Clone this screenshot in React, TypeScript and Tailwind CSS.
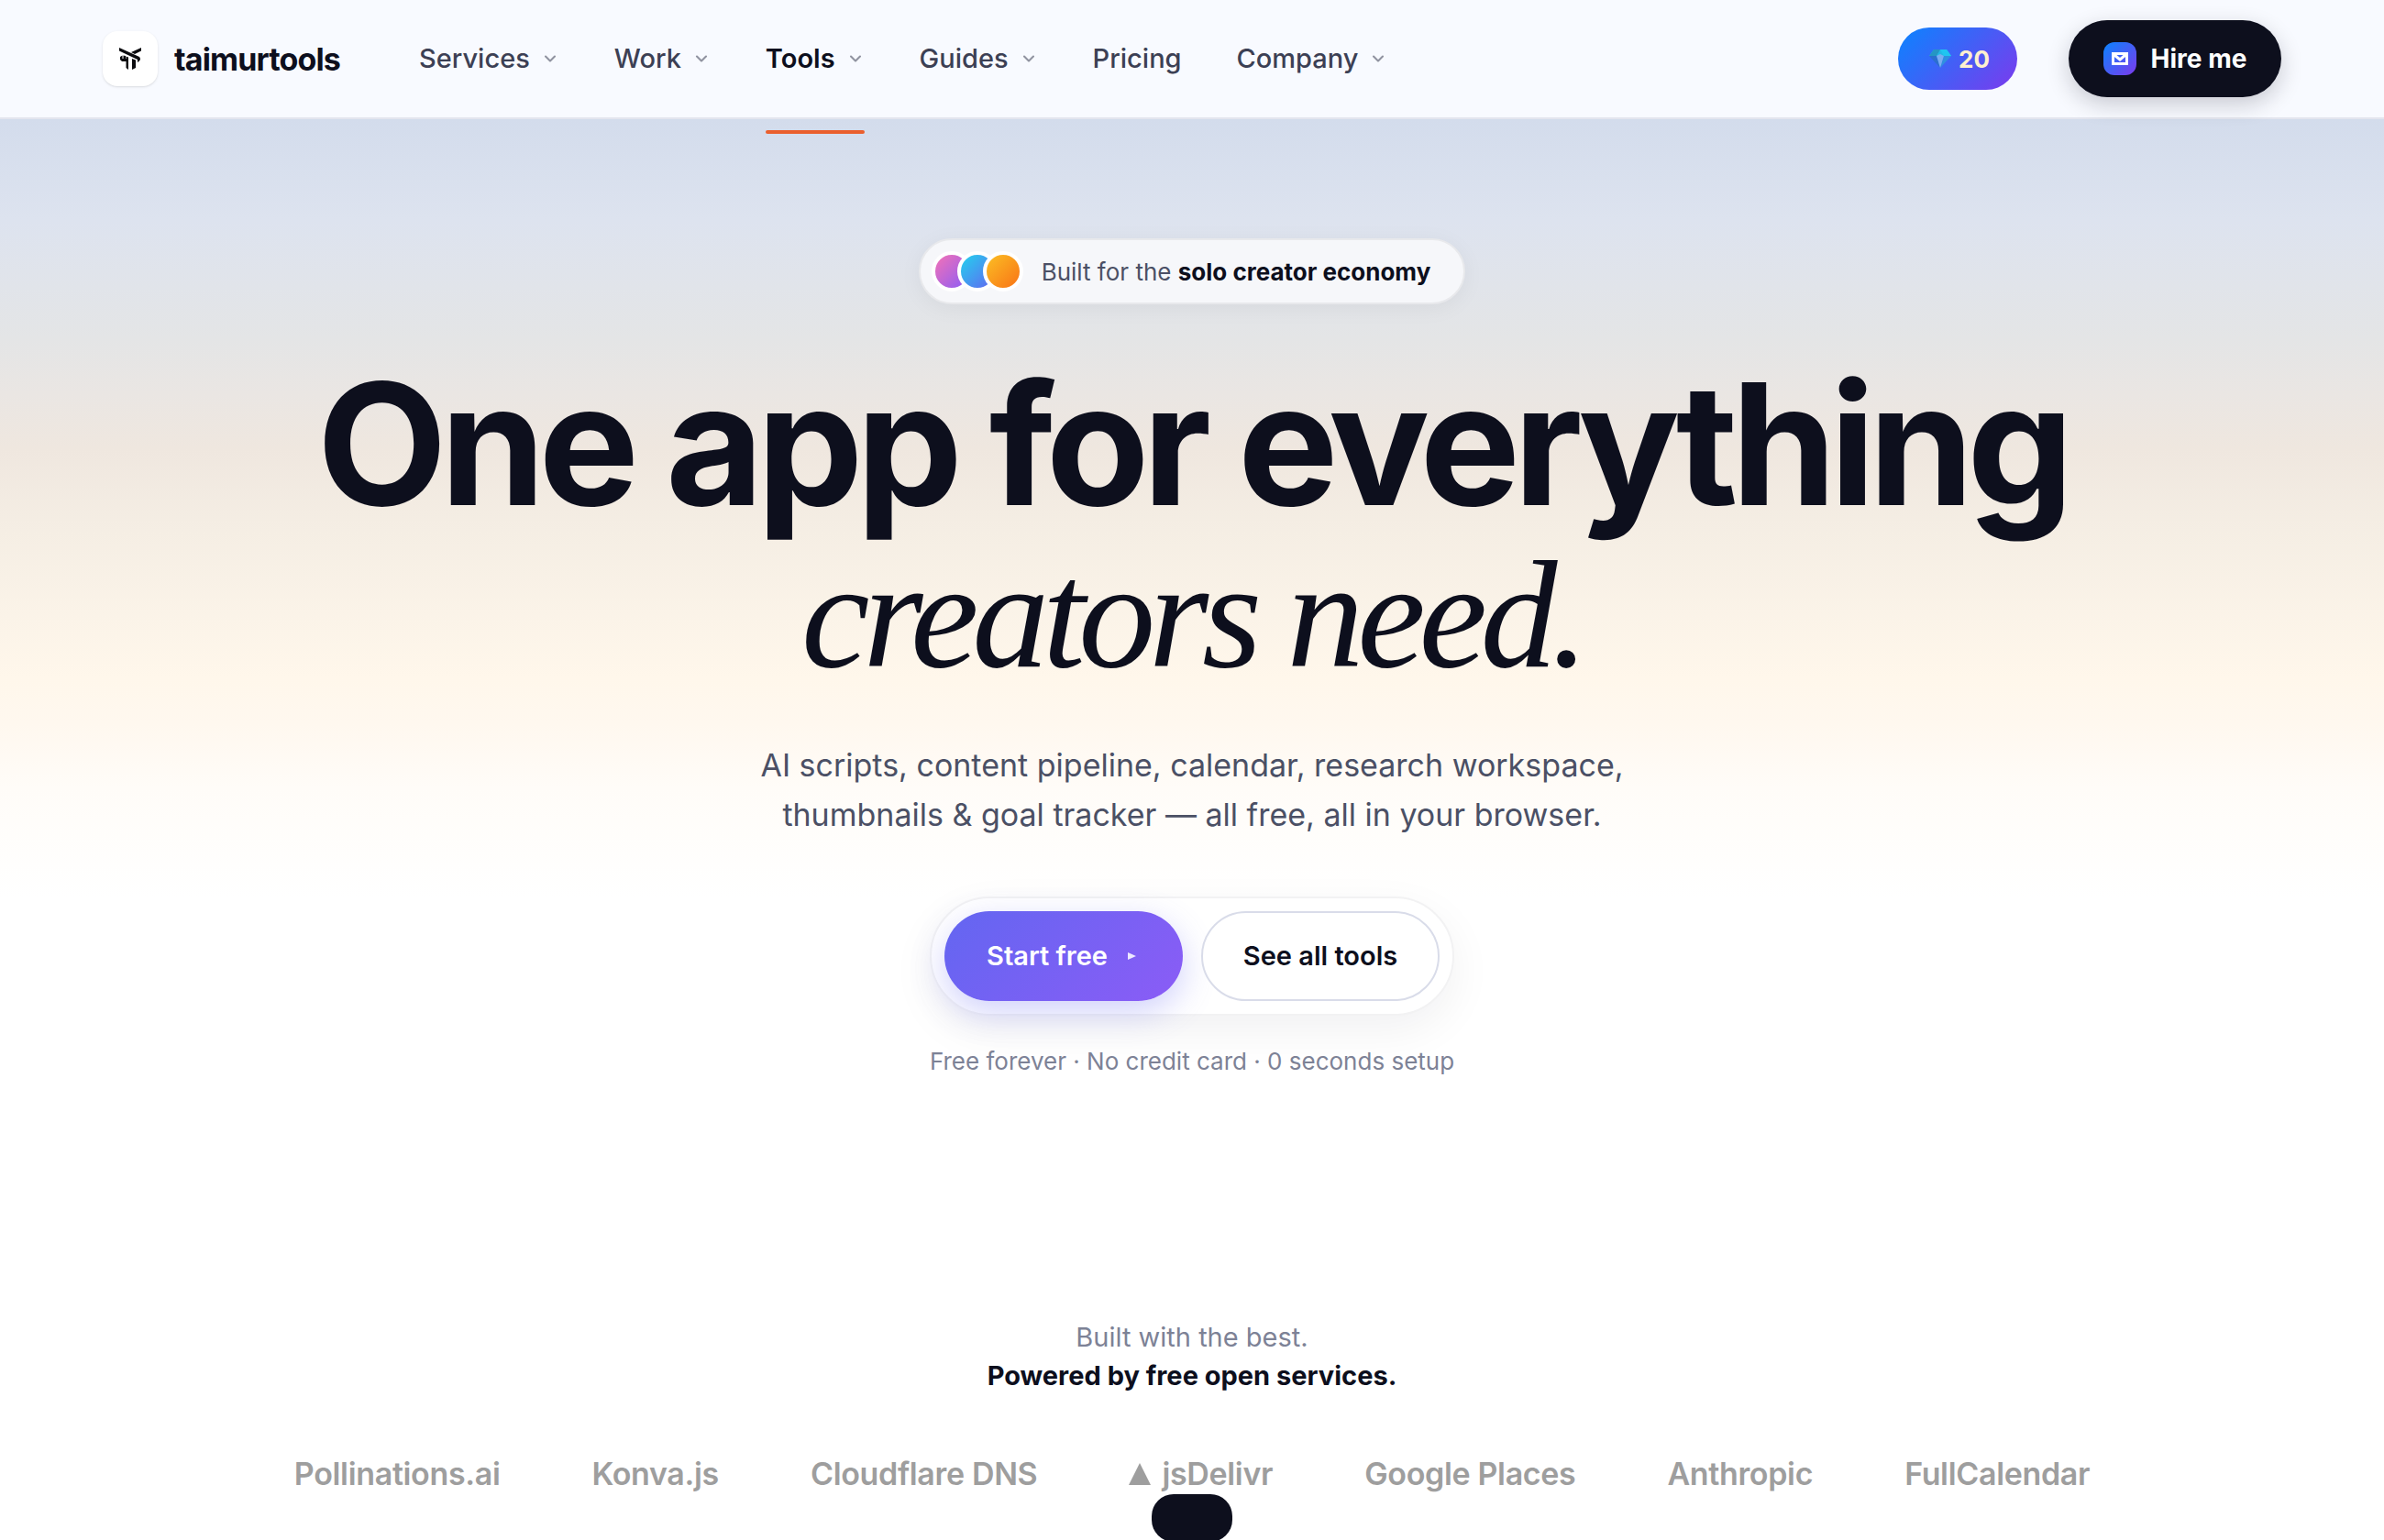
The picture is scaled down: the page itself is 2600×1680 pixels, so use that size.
import React from "react";
import { ChevronDown } from "lucide-react";

const navItems = [
  { title: "Services", menu: true, active: false },
  { title: "Work", menu: true, active: false },
  { title: "Tools", menu: true, active: true },
  { title: "Guides", menu: true, active: false },
  { title: "Pricing", menu: false, active: false },
  { title: "Company", menu: true, active: false },
];

const partners = [
  { name: "Pollinations.ai", mark: false },
  { name: "Konva.js", mark: false },
  { name: "Cloudflare DNS", mark: false },
  { name: "jsDelivr", mark: true },
  { name: "Google Places", mark: false },
  { name: "Anthropic", mark: false },
  { name: "FullCalendar", mark: false },
];

const Logo = () => (
  <svg viewBox="0 0 24 24" className="w-6 h-6" fill="#0b0b0f">
    <path d="M0 0 L22 10 Q23 11 23 13 Q22 15 20 16 L20 13 L0 3.5 Z" />
    <path d="M24 0 V3.5 L17 7 L13 5 Z" />
    <path d="M1 10 L3.5 8.5 V12 H4.5 V8.5 L7 9 V12 H7.5 V9.5 L10 10.5 V24 L7.5 22 V15 H3 L1 13 Z" />
    <path d="M14 12 L18 13.5 V22 L14 24 Z" />
  </svg>
);

const Gem = () => (
  <svg viewBox="0 0 24 20" className="w-6 h-5">
    <path d="M5 0 H19 L24 7 H0 Z" fill="#22b8e6" />
    <path d="M5 0 L0 7 H8 L12 0 Z" fill="#2596c4" />
    <path d="M19 0 L24 7 H16 L12 0 Z" fill="#20c5f0" />
    <path d="M0 7 H8 L12 20 Z" fill="#2b6fce" />
    <path d="M24 7 H16 L12 20 Z" fill="#2f8fe0" />
    <path d="M8 7 L12 5 L16 7 L12 20 Z" fill="#79aef2" />
  </svg>
);

const Header = () => {
  return (
    <header className="relative z-10 h-[130px] px-28 flex items-center bg-[#f8faff] border-b-2 border-[#e3e5ee]">
      <a href="#" className="flex items-center gap-[18px]">
        <span className="w-[60px] h-[60px] rounded-2xl bg-white shadow-sm flex items-center justify-center">
          <Logo />
        </span>
        <span className="text-[34px] font-bold tracking-tight text-[#0d0f1d]">taimurtools</span>
      </a>
      <nav className="ml-[86px] flex items-center gap-[60px]">
        {navItems.map((item) => (
          <a
            href="#"
            key={item.title}
            className={`relative flex items-center gap-3 text-[29px] ${
              item.active ? "font-semibold text-[#0d0f1d]" : "font-medium text-[#3c4054]"
            }`}
          >
            {item.title}
            {item.menu && <ChevronDown className="w-5 h-5 text-[#9093a0]" strokeWidth={2.5} />}
            {item.active && (
              <span className="absolute left-0 right-0 top-[100px] h-1 rounded-full bg-[#ea5f2d]"></span>
            )}
          </a>
        ))}
      </nav>
      <div className="ml-auto flex items-center gap-14">
        <button className="w-[130px] h-[68px] pl-1 rounded-full bg-[linear-gradient(135deg,#0a84ff,#7c3aed)] flex items-center justify-center gap-2 text-[26px] font-bold text-[#fdf0cf]">
          <Gem />
          20
        </button>
        <button className="w-[232px] h-[84px] rounded-full bg-[#0d0f1d] shadow-[0_8px_24px_rgba(13,15,29,0.2)] flex items-center justify-center gap-4 text-[28px] font-bold text-white">
          <span className="w-9 h-9 rounded-xl bg-[linear-gradient(135deg,#0a84ff,#7c3aed)] flex items-center justify-center">
            <svg viewBox="0 0 18 14" className="w-[18px] h-[14px]" fill="none" stroke="white" strokeWidth="3">
              <path d="M1.5 1.5 H16.5 V12.5 H1.5 Z M3 3 L9 8 L15 3" />
            </svg>
          </span>
          Hire me
        </button>
      </div>
    </header>
  );
};

const Hero = () => {
  return (
    <section className="pt-[130px] flex flex-col items-center text-center">
      <div className="h-[72px] pl-3 pr-9 flex items-center rounded-full bg-[#f6f7fa] border-2 border-[#e8e9ec] shadow-[0_4px_24px_rgba(13,15,29,0.05)]">
        <div className="flex -space-x-4 mr-5">
          <span className="w-11 h-11 rounded-full border-4 border-white bg-[linear-gradient(135deg,#f472b6,#8b5cf6)]"></span>
          <span className="w-11 h-11 rounded-full border-4 border-white bg-[linear-gradient(135deg,#22d3ee,#6366f1)]"></span>
          <span className="w-11 h-11 rounded-full border-4 border-white bg-[linear-gradient(135deg,#fbbf24,#f97316)]"></span>
        </div>
        <p className="text-[26px] text-[#4b5065]">
          Built for the <strong className="font-bold text-[#0d0f1d]">solo creator economy</strong>
        </p>
      </div>
      <h1 className="mt-[62px] text-[184px] leading-[180px] font-bold tracking-[-0.04em] text-[#0d0f1d]">
        One app for everything
        <em className="block font-['Liberation_Serif',serif] text-[168px] leading-[192px] font-normal">
          creators need.
        </em>
      </h1>
      <p className="mt-[42px] text-[34px] leading-[54px] text-[#4b5065]">
        AI scripts, content pipeline, calendar, research workspace,
        <br />
        thumbnails &amp; goal tracker — all free, all in your browser.
      </p>
      <div className="mt-[62px] p-[14px] flex gap-5 rounded-full bg-white border-2 border-[#f2f2f3] shadow-[0_16px_48px_rgba(13,15,29,0.06)]">
        <button className="w-[260px] h-[98px] rounded-full bg-[linear-gradient(135deg,#6366f1,#8b5cf6)] shadow-[0_12px_36px_rgba(99,102,241,0.3)] flex items-center justify-center gap-[22px] text-[29px] font-semibold text-white">
          Start free
          <svg viewBox="0 0 14 8" className="w-[14px] h-2">
            <path d="M0 0 L9 4 L0 8 Z" fill="#ece8ff" />
          </svg>
        </button>
        <button className="w-[260px] h-[98px] rounded-full bg-white border-2 border-[#d9dce9] text-[29px] font-semibold text-[#0d0f1d]">
          See all tools
        </button>
      </div>
      <p className="mt-8 text-[26px] leading-9 text-[#7d8296]">
        Free forever · No credit card · 0 seconds setup
      </p>
    </section>
  );
};

const Partners = () => {
  return (
    <section className="mt-[262px] text-center">
      <p className="text-[29px] leading-[42px] text-[#7d8296]">
        Built with the best.
        <strong className="block font-bold text-[#0d0f1d]">Powered by free open services.</strong>
      </p>
      <ul className="mt-16 flex justify-center gap-[100px] text-[34px] leading-[44px] font-semibold tracking-[-0.01em] text-[#9e9e9e]">
        {partners.map((item) => (
          <li key={item.name} className="flex items-center gap-3">
            {item.mark && (
              <svg viewBox="0 0 24 24" className="w-6 h-6" fill="currentColor">
                <path d="M12 0 L24 24 H0 Z" />
              </svg>
            )}
            {item.name}
          </li>
        ))}
      </ul>
      <div className="mx-auto w-[88px] h-[52px] rounded-3xl bg-[#0d0f1d]"></div>
    </section>
  );
};

const App = () => {
  return (
    <div className="min-h-screen font-['Inter',sans-serif] bg-[linear-gradient(180deg,#d3dcec_130px,#dde3ef_240px,#e4e5e6_370px,#eae6e3_430px,#efe7df_490px,#f5eee4_580px,#fff7eb_740px,#fff8ef_790px,#fffcf8_860px,#ffffff_980px)]">
      <Header />
      <main>
        <Hero />
        <Partners />
      </main>
    </div>
  );
};

export default App;
